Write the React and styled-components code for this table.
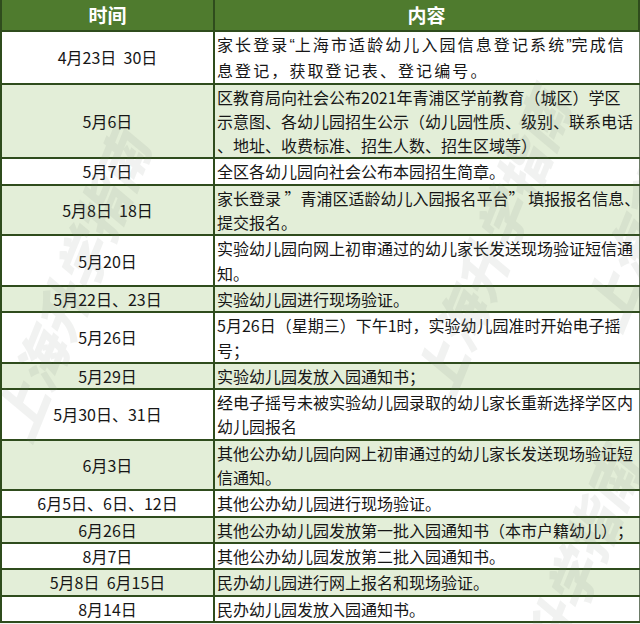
import React from 'react';
import styled, { createGlobalStyle } from 'styled-components';

const GlobalStyle = createGlobalStyle`
  html, body {
    margin: 0;
    padding: 0;
    background: #f3f3f1;
  }
  body {
    font-family: "Noto Sans CJK SC", "Noto Sans", sans-serif;
    text-spacing-trim: space-all;
  }
`;

const Page = styled.div`
  position: relative;
  width: 640px;
  height: 624px;
  overflow: hidden;
  background: #f3f3f1;
`;

const Table = styled.table`
  width: 638px;
  border-collapse: collapse;
  table-layout: fixed;
  color: #161616;
  font-size: 16px;
`;

const HeadCell = styled.th`
  height: 30px;
  padding: 0;
  background: #4f7b2e;
  color: #ffffff;
  font-size: 19px;
  font-weight: 700;
  line-height: 30px;
  text-align: center;
  border: 2px solid #2f4c1d;
  border-top: none;
`;

const Row = styled.tr`
  background: ${(p) => (p.$alt ? '#e3eed8' : '#ffffff')};
`;

const DateCell = styled.td`
  padding: 0;
  text-align: center;
  line-height: 24.3px;
  border: 2px solid #2f4c1d;
  white-space: pre;
`;

const ContentCell = styled.td`
  padding: 0 0 0 2px;
  text-align: left;
  line-height: 24.3px;
  letter-spacing: ${(p) => p.$spacing || '0px'};
  border: 2px solid #2f4c1d;
  border-right: 1px solid #6d7b68;
`;

const Line = styled.span`
  display: block;
  white-space: nowrap;
`;

const Narrow = styled.span`
  font-family: "Liberation Sans", sans-serif;
  letter-spacing: 0;
`;

const Watermark = styled.div`
  position: absolute;
  left: ${(p) => p.$x}px;
  top: ${(p) => p.$y}px;
  transform: rotate(-68deg) skewX(-18deg);
  transform-origin: center;
  font-family: "Noto Sans CJK SC", sans-serif;
  font-size: 54px;
  font-weight: 900;
  color: rgba(120, 130, 120, 0.1);
  white-space: nowrap;
  pointer-events: none;
`;

const rows = [
  {
    date: '4月23日  30日',
    spacing: '2.1px',
    lines: [
      <>家长登录<Narrow>“</Narrow>上海市适龄幼儿入园信息登记系统<Narrow>”</Narrow>完成信</>,
      '息登记，获取登记表、登记编号。',
    ],
  },
  {
    date: '5月6日',
    lines: [
      '区教育局向社会公布2021年青浦区学前教育（城区）学区',
      '示意图、各幼儿园招生公示（幼儿园性质、级别、联系电话',
      '、地址、收费标准、招生人数、招生区域等）',
    ],
  },
  { date: '5月7日', lines: ['全区各幼儿园向社会公布本园招生简章。'] },
  {
    date: '5月8日  18日',
    lines: ['家长登录 ”青浦区适龄幼儿入园报名平台” 填报报名信息、', '提交报名。'],
  },
  {
    date: '5月20日',
    lines: ['实验幼儿园向网上初审通过的幼儿家长发送现场验证短信通', '知。'],
  },
  { date: '5月22日、23日', lines: ['实验幼儿园进行现场验证。'] },
  {
    date: '5月26日',
    lines: ['5月26日（星期三）下午1时，实验幼儿园准时开始电子摇', '号；'],
  },
  { date: '5月29日', lines: ['实验幼儿园发放入园通知书；'] },
  {
    date: '5月30日、31日',
    lines: ['经电子摇号未被实验幼儿园录取的幼儿家长重新选择学区内', '幼儿园报名'],
  },
  {
    date: '6月3日',
    lines: ['其他公办幼儿园向网上初审通过的幼儿家长发送现场验证短', '信通知。'],
  },
  { date: '6月5日、6日、12日', lines: ['其他公办幼儿园进行现场验证。'] },
  { date: '6月26日', lines: ['其他公办幼儿园发放第一批入园通知书（本市户籍幼儿）；'] },
  { date: '8月7日', lines: ['其他公办幼儿园发放第二批入园通知书。'] },
  { date: '5月8日  6月15日', lines: ['民办幼儿园进行网上报名和现场验证。'] },
  { date: '8月14日', lines: ['民办幼儿园发放入园通知书。'] },
];

const marks = [
  { x: -90, y: 240 },
  { x: 330, y: 200 },
  { x: 500, y: 130 },
  { x: 400, y: 560 },
];

export default function App() {
  return (
    <Page>
      <GlobalStyle />
      <Table>
        <colgroup>
          <col style={{ width: 213 }} />
          <col style={{ width: 425 }} />
        </colgroup>
        <thead>
          <tr>
            <HeadCell>时间</HeadCell>
            <HeadCell>内容</HeadCell>
          </tr>
        </thead>
        <tbody>
          {rows.map((r, i) => (
            <Row key={i} $alt={i % 2 === 1}>
              <DateCell>{r.date}</DateCell>
              <ContentCell $spacing={r.spacing}>
                {r.lines.map((l, j) => (
                  <Line key={j}>{l}</Line>
                ))}
              </ContentCell>
            </Row>
          ))}
        </tbody>
      </Table>
      {marks.map((m, i) => (
        <Watermark key={i} $x={m.x} $y={m.y}>
          上海升学指南
        </Watermark>
      ))}
    </Page>
  );
}
